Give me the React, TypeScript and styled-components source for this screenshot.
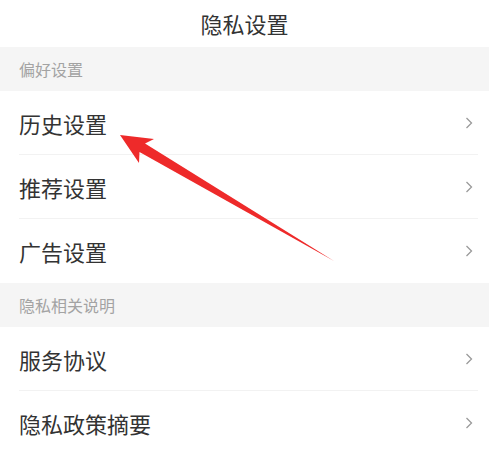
import styled, { createGlobalStyle } from "styled-components";

const GlobalStyle = createGlobalStyle`
	html, body {
		margin: 0;
		padding: 0;
		background: #ffffff;
		font-family: "Noto Sans CJK SC", "Noto Sans", sans-serif;
	}
`;

const Page = styled.div`
	position: relative;
	width: 489px;
	height: 459px;
	overflow: hidden;
	background: #ffffff;
`;
const TitleBar = styled.div`
	height: 47px;
	display: flex;
	align-items: center;
	justify-content: center;
	font-size: 22px;
	color: #333333;
	padding-bottom: 2px;
	box-sizing: border-box;
`;
const SectionHeader = styled.div`
	height: 44px;
	display: flex;
	align-items: center;
	padding-left: 19px;
	background: #f5f5f5;
	font-size: 16px;
	color: #a3a3a3;
`;
const Row = styled.div<{ $last?: boolean }>`
	height: 64px;
	margin: 0 11px 0 19px;
	display: flex;
	align-items: center;
	justify-content: space-between;
	box-sizing: border-box;
	border-bottom: 1px solid ${(p) => (p.$last ? "transparent" : "#f2f2f2")};
	font-size: 22px;
	color: #333333;
`;
const Label = styled.span`
	padding-top: 1px;
`;
const Chevron = styled.svg`
	width: 8px;
	height: 12px;
	margin-right: 5px;
`;
const Arrow = styled.svg`
	position: absolute;
	left: 0;
	top: 0;
	width: 489px;
	height: 459px;
	pointer-events: none;
`;

const sections = [
	{ title: "偏好设置", items: ["历史设置", "推荐设置", "广告设置"] },
	{ title: "隐私相关说明", items: ["服务协议", "隐私政策摘要"] },
];

const ChevronIcon = () => (
	<Chevron viewBox="0 0 8 12">
		<polyline points="1.5,1 6.5,6 1.5,11" fill="none" stroke="#9a9a9a" strokeWidth="1.3" />
	</Chevron>
);

const App = () => (
	<Page>
		<GlobalStyle />
		<TitleBar>隐私设置</TitleBar>
		{sections.map((s) => (
			<div key={s.title}>
				<SectionHeader>{s.title}</SectionHeader>
				{s.items.map((item, i) => (
					<Row key={item} $last={i === s.items.length - 1}>
						<Label>{item}</Label>
						<ChevronIcon />
					</Row>
				))}
			</div>
		))}
		<Arrow viewBox="0 0 489 459">
			<defs>
				<filter id="soft" x="-10%" y="-10%" width="120%" height="120%">
					<feGaussianBlur stdDeviation="0.6" />
				</filter>
			</defs>
			<polygon
				points="120,135 154,139 145,143.5 334,261 139.5,152 139,163"
				fill="#ee2a2a"
				filter="url(#soft)"
			/>
		</Arrow>
	</Page>
);

export default App;
